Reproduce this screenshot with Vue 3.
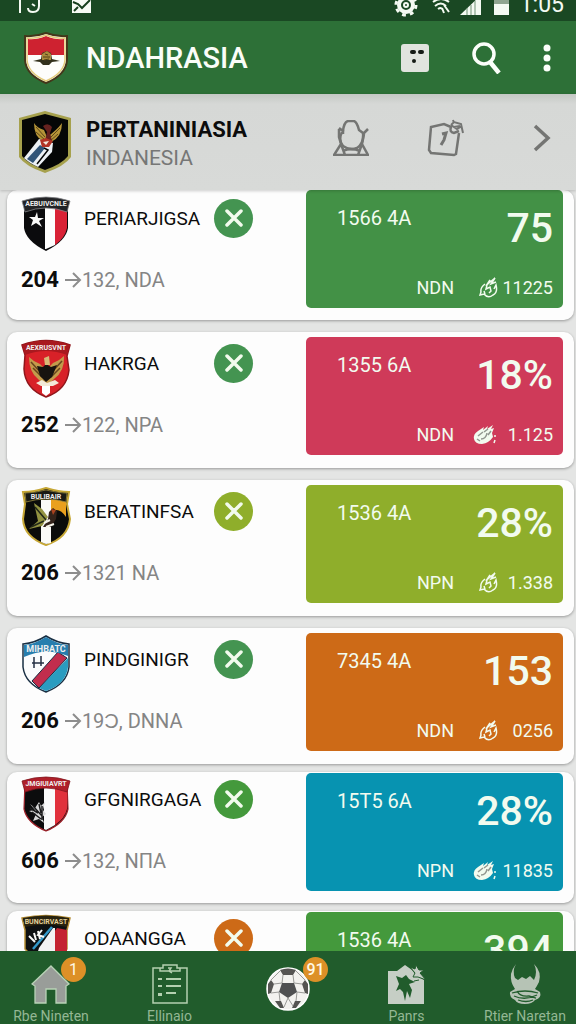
<script setup>
import { ref } from "vue";

const clubs = ref([
  { crest: "star", name: "PERIARJIGSA", badge: "green", points: "204", detail: "132, NDA", color: "green", code: "1566 4A", score: "75", tag: "NDN", icon: "flame", total: "11225" },
  { crest: "eagle", name: "HAKRGA", badge: "green", points: "252", detail: "122, NPA", color: "pink", code: "1355 6A", score: "18%", tag: "NDN", icon: "glove", total: "1.125" },
  { crest: "gold", name: "BERATINFSA", badge: "lime", points: "206", detail: "1321 NA", color: "lime", code: "1536 4A", score: "28%", tag: "NPN", icon: "flame", total: "1.338" },
  { crest: "blue", name: "PINDGINIGR", badge: "green", points: "206", detail: "19Ɔ, DNNA", color: "orange", code: "7345 4A", score: "153", tag: "NDN", icon: "flame", total: "0256" },
  { crest: "red", name: "GFGNIRGAGA", badge: "leaf", points: "606", detail: "132, NПA", color: "teal", code: "15T5 6A", score: "28%", tag: "NPN", icon: "glove", total: "11835", compact: true },
  { crest: "dark", name: "ODAANGGA", badge: "orange", points: "206", detail: "132, NDA", color: "leaf", code: "1536 4A", score: "394", tag: "NDN", icon: "flame", total: "1.225", compact: true },
]);

const tabs = [
  { icon: "home", label: "Rbe Nineten", count: "1" },
  { icon: "notes", label: "Ellinaio" },
  { icon: "ball", label: "", count: "91" },
  { icon: "photo", label: "Panrs" },
  { icon: "horns", label: "Rtier Naretan" },
];
</script>

<template>
  <div class="app">
    <div class="status">
      <svg class="status-left" width="80" height="14" viewBox="0 0 80 14">
        <path d="M2 0V13M21 0V6Q21 12 15 12Q10 12 10 8M14 4L17 6" fill="none" stroke="#f4faf2" stroke-width="2" />
        <rect x="54" y="-4" width="19" height="17" fill="#f7fbf5" />
        <path d="M55 2L60 4L64 8L72 0M56 11L60 7" fill="none" stroke="#173f1d" stroke-width="2" />
      </svg>
      <div class="status-right">
        <svg width="120" height="17" viewBox="0 0 120 17">
          <circle cx="14" cy="5" r="7" fill="none" stroke="#f4faf2" stroke-width="4" />
          <circle cx="14" cy="5" r="10" fill="none" stroke="#f4faf2" stroke-width="3" stroke-dasharray="3.8 4.05" />
          <circle cx="14" cy="5" r="2" fill="none" stroke="#f4faf2" stroke-width="2" />
          <path d="M41 2Q49-4 57 2M43 6Q49 1 54 6M46 9Q49 7 50 9M52 5L57 12M50 8L52 13" fill="none" stroke="#f4faf2" stroke-width="2" />
          <path d="M68 15L89-5V15Z" fill="#f4faf2" />
          <path d="M75 8V15M79 5V15M83 1V15" stroke="#6f9172" />
          <rect x="102" y="-2" width="15" height="17" fill="#f4faf2" />
          <rect x="102" y="-2" width="15" height="6" fill="#8fa590" />
        </svg>
        <span class="clock">1:05</span>
      </div>
    </div>

    <header class="topbar">
      <svg class="logo" width="46" height="52" viewBox="0 0 46 52">
        <path d="M23 1Q34 5 44 4V28Q43 43 23 51Q3 43 2 28V4Q12 5 23 1Z" fill="#fdfdfb" stroke="#44371a" stroke-width="2" />
        <path d="M23 4Q33 8 41 7V23H5V7Q13 8 23 4Z" fill="#ce2230" />
        <path d="M23 3Q34 7 42 6V28Q41 41 23 49Q5 41 4 28V6Q12 7 23 3Z" fill="none" stroke="#e3cb7c" stroke-width="1.5" />
        <path d="M10 29L18 27L19 21L24 19L28 21L29 27L37 29L29 30L26 33H20L17 30Z" fill="#32301c" />
        <path d="M19 22L24 19L28 22L28 28H19Z" fill="#a98a3d" />
        <path d="M20 25H27M21 28L26 27M22 22L25 23" stroke="#544019" stroke-width="1" />
      </svg>
      <h1>NDAHRASIA</h1>
      <button class="icon-btn" aria-label="Board">
        <svg width="30" height="30" viewBox="0 0 30 30">
          <rect x="1" y="1" width="28" height="28" rx="3" fill="#e1e4de" />
          <rect x="10" y="7" width="6" height="4" rx="2" fill="#151b15" />
          <rect x="18" y="7" width="6" height="4" rx="2" fill="#151b15" />
          <rect x="12" y="16" width="4" height="4" rx="2" fill="#151b15" />
        </svg>
      </button>
      <button class="icon-btn search" aria-label="Search">
        <svg width="30" height="32" viewBox="0 0 30 32">
          <circle cx="12" cy="12" r="10" fill="none" stroke="#fbfefa" stroke-width="3.5" />
          <path d="M18 20L27 31" stroke="#fbfefa" stroke-width="4.5" />
        </svg>
      </button>
      <button class="icon-btn" aria-label="More">
        <svg width="10" height="30" viewBox="0 0 10 30">
          <circle cx="5" cy="5" r="3.5" fill="#fbfefa" />
          <circle cx="5" cy="15" r="3.5" fill="#fbfefa" />
          <circle cx="5" cy="25" r="3.5" fill="#fbfefa" />
        </svg>
      </button>
    </header>

    <section class="league">
      <svg class="league-crest" width="54" height="64" viewBox="0 0 54 64">
        <path d="M27 1L53 8V47Q47 56 27 63Q7 56 1 47V8Z" fill="#a6a14d" />
        <path d="M27 4L50 10V46Q44 54 27 60Q10 54 4 46V10Z" fill="#050606" />
        <path d="M21 29L35 33L34 42L20 57Q11 53 6 48Z" fill="#edf1f5" />
        <path d="M22 35L27 38L15 53L9 49Z" fill="#315477" />
        <path d="M26 38L30 40L19 54" fill="none" stroke="#050606" stroke-width="1.5" />
        <path d="M16 13Q19 18 26 20L29 27Q39 20 44 13Q44 27 33 32L25 31Q16 27 16 13Z" fill="#b59438" />
        <path d="M18 17L27 27M18 22L27 30M42 18L32 28M40 24L32 31" stroke="#5f4718" />
        <path d="M25 16Q30 12 34 17L32 23L34 31H27L29 22Z" fill="#66221f" />
        <path d="M22 30L28 28L35 31L31 37H24Z" fill="#b23326" />
        <path d="M25 32L31 31L28 35Z" fill="#f3e7dc" />
      </svg>
      <div class="league-text">
        <strong>PERTANINIASIA</strong>
        <span>INDANESIA</span>
      </div>
      <button class="icon-btn" aria-label="Supporters">
        <svg width="36" height="36" viewBox="0 0 36 36" fill="none" stroke="#747573" stroke-width="2.5">
          <path d="M10 11Q11 2 15 1H21Q24 2 26 10L30 13Q31 24 24 28Q17 31 10 26Q5 20 9 12" />
          <path d="M6 8L10 11V14M30 14L35 9M6 9V17L8 24L1 35H35L29 24L31 14M8 24L12 35M29 24L25 35M10 31Q18 27 27 31" />
        </svg>
      </button>
      <button class="icon-btn ticket" aria-label="Fixtures">
        <svg width="38" height="38" viewBox="0 0 38 38" fill="none" stroke="#747573" stroke-width="2.5">
          <path d="M32 14L29 35L27 36L4 34L2 31L4 8L17 5L24 8Q22 13 27 14L32 12" />
          <path d="M24 6L27 3L34 5L36 14M24 6L30 10L35 7M27 8L33 7M27 4L26 1" stroke-width="2" />
          <path d="M15 15L19 14L17 21L14 26" stroke-width="3" />
        </svg>
      </button>
      <button class="icon-btn" aria-label="Open league">
        <svg width="18" height="28" viewBox="0 0 18 28">
          <path d="M2 2L15 14L2 26" fill="none" stroke="#747573" stroke-width="3.5" />
        </svg>
      </button>
    </section>

    <main class="club-list">
      <article v-for="club in clubs" :key="club.name" class="card" :class="{ compact: club.compact }">
        <div class="club">
          <div class="club-head">
            <svg class="crest" width="50" height="60" viewBox="0 0 50 60">
              <template v-if="club.crest === 'star'">
                <path d="M3 7H47V34Q45 47 25 57Q5 47 3 34Z" fill="#0b0b0d" />
                <path d="M24 13H34V51L25 55H24Z" fill="#fdfdfd" />
                <path d="M34 13H46V34Q44 44 34 51Z" fill="#d92236" />
                <path d="M1 7Q25-1 49 7L46 18Q25 10 4 18Z" fill="#222326" stroke="#85878a" stroke-width="0.8" />
                <path d="M16 18L17 24L23 24L18 27L21 33L15 29L10 32L12 26L8 23L14 23Z" fill="#f9f9f9" />
                <text x="25" y="12" class="crest-text">AEBUIVCNLE</text>
              </template>
              <template v-else-if="club.crest === 'eagle'">
                <path d="M1 6Q25-3 49 6L46 17L48 31Q46 51 25 58Q4 50 3 30L4 16Z" fill="#d82128" stroke="#8f161b" stroke-width="1.5" />
                <path d="M1 6Q25-3 49 6L46 16Q25 8 4 16Z" fill="#a9191f" />
                <text x="25" y="11" class="crest-text">AEXRUSVNT</text>
                <path d="M8 18Q13 23 19 25L25 31L32 24Q38 22 43 17Q44 32 33 40L29 44H21L17 40Q8 33 8 18Z" fill="#c39a4b" />
                <path d="M10 23L20 34M12 29L21 38M41 22L30 34M39 29L30 38" stroke="#67451e" stroke-width="1.5" />
                <path d="M16 27L22 28L25 25L30 28L36 26L31 38L25 43L19 37Z" fill="#17130f" />
                <path d="M23 19L28 17L29 26H24Z" fill="#d9b976" />
                <path d="M15 44L21 41L26 44L34 41L38 44L32 47L20 47Z" fill="#f3e9d8" />
                <path d="M21 47H29V54L25 57L21 54Z" fill="#fff" />
              </template>
              <template v-else-if="club.crest === 'gold'">
                <path d="M2 5Q13 5 25 1Q38 5 48 5L46 17L49 32Q47 51 25 58Q3 50 2 32L4 17Z" fill="#0b0c0a" stroke="#c6a735" stroke-width="2" />
                <path d="M20 13H30V56L25 57L20 55Z" fill="#fafaf7" />
                <path d="M30 13H45V30Q38 19 30 25Z" fill="#e9a01e" />
                <path d="M4 6Q13 6 25 3Q38 6 46 6L45 15Q25 9 5 15Z" fill="#191a15" stroke="#998940" stroke-width="0.8" />
                <text x="25" y="12" class="crest-text">BULIBAIR</text>
                <path d="M13 16L21 22L27 30L21 39L8 42L17 34Z" fill="#939341" />
                <path d="M14 20L25 33M10 40L23 34" stroke="#222818" stroke-width="1.5" />
                <path d="M28 25L32 21L36 24L35 32L30 40L22 40L27 32Z" fill="#33231a" />
                <path d="M30 22L35 23L32 28Z" fill="#a9431f" />
                <path d="M23 36L29 33M25 40L33 37" stroke="#f4f3e9" stroke-width="2" />
              </template>
              <template v-else-if="club.crest === 'blue'">
                <path d="M25 1Q36 8 48 9V32Q46 49 25 57Q4 49 2 32V9Q14 8 25 1Z" fill="#fbfcfd" stroke="#192f43" stroke-width="1.5" />
                <path d="M47 23L47 32Q45 49 25 56L18 53Z" fill="#2a9cc0" />
                <path d="M37 17L46 23L18 53L11 46Z" fill="#c12d4d" stroke="#182c42" stroke-width="1" />
                <path d="M25 2Q36 9 47 10V21Q25 12 3 22V10Q14 9 25 2Z" fill="#277eae" />
                <text x="25" y="17" class="crest-text wide">MIHBATC</text>
                <path d="M13 22V33M20 21V31M11 28H23" stroke="#263144" stroke-width="1.5" />
              </template>
              <template v-else-if="club.crest === 'red'">
                <path d="M4 8H46L47 34Q44 48 25 56Q6 48 3 34Z" fill="#0c0c0d" stroke="#9d2028" stroke-width="1.2" />
                <path d="M23 13H34V50L25 55L23 54Z" fill="#fbfbfb" />
                <path d="M34 13H46V34Q44 43 34 50Z" fill="#e1313c" />
                <path d="M1 6Q25-2 49 6L46 17Q25 9 4 17Z" fill="#af1f29" stroke="#7f151d" stroke-width="0.8" />
                <text x="25" y="11" class="crest-text">JMGIUIAVRT</text>
                <path d="M9 29L14 33L18 27L20 31L24 27L22 35L25 39L21 42L23 48L18 44L12 46L15 39L8 36L14 35Z" fill="#d9d9d9" />
                <path d="M12 31L21 41M18 29L20 38M21 31V45M11 37L20 44M9 33L17 38" stroke="#1b1b1c" stroke-width="1.5" />
              </template>
              <template v-else>
                <path d="M1 4Q25-1 49 4L46 16V35L25 57L4 35V16Z" fill="#0d1011" stroke="#b58e35" stroke-width="1.5" />
                <path d="M21 35L36 14L46 16V40L25 57Z" fill="#c42331" />
                <path d="M18 34L32 14H34V50L25 57L14 47Z" fill="#f3f3f4" />
                <path d="M12 35L31 13" stroke="#3398c9" stroke-width="2.5" />
                <path d="M8 22L14 28M13 19L15 26M17 17L19 25M21 16L17 21L23 23" stroke="#f9f9f7" stroke-width="2" fill="none" />
                <path d="M2 4Q25-1 48 4L46 13Q25 8 4 13Z" fill="#28230f" />
                <text x="25" y="10" class="crest-text yellow">BUNCIRVAST</text>
              </template>
            </svg>
            <h2>{{ club.name }}</h2>
            <button class="badge" :class="club.badge" :aria-label="'Remove ' + club.name">
              <svg width="18" height="18" viewBox="0 0 18 18">
                <path d="M2 2L16 16M16 2L2 16" stroke="#f2fbed" stroke-width="3.5" stroke-linecap="round" />
              </svg>
            </button>
          </div>
          <p class="record">
            <strong>{{ club.points }}</strong>
            <svg width="17" height="16" viewBox="0 0 17 16">
              <path d="M0 8H15M8 1L15 8L8 15" fill="none" stroke="#8d8d8d" stroke-width="2" />
            </svg>
            <span>{{ club.detail }}</span>
          </p>
        </div>

        <div class="panel" :class="club.color">
          <div class="panel-top">
            <span>{{ club.code }}</span>
            <strong>{{ club.score }}</strong>
          </div>
          <div class="panel-bottom">
            <span>{{ club.tag }}</span>
            <div class="total">
              <svg v-if="club.icon === 'flame'" class="flame" width="19" height="22" viewBox="0 0 19 22" fill="none" stroke="currentColor" stroke-width="1.5">
                <path d="M6 7Q1 11 2 15L1 18L5 17Q9 22 14 18Q19 16 17 8L15 12M7 9L11 3L10 6L16 1L12 7L17 5M8 8L7 12L11 10L12 14L10 16M5 14L6 17" />
              </svg>
              <svg v-else width="24" height="22" viewBox="0 0 24 22">
                <path d="M1 15Q0 10 5 7L11 3L10 6L15 2L14 5L20 1L18 5L21 4L19 9L20 13Q16 19 9 20Q2 20 1 15Z" fill="currentColor" />
                <path d="M5 12L10 8M8 15Q13 15 14 9M11 8L15 5M15 11L18 7M4 15L7 17" stroke="#0006" stroke-width="1.5" fill="none" />
                <path d="M22 11V13M22 16L21 19" stroke="currentColor" stroke-width="1.5" />
              </svg>
              <span>{{ club.total }}</span>
            </div>
          </div>
        </div>
      </article>
    </main>

    <nav class="tabs">
      <a v-for="tab in tabs" :key="tab.icon" href="#" class="tab" :class="tab.icon" :aria-label="tab.label || 'Matches'">
        <span class="tab-icon">
          <svg v-if="tab.icon === 'home'" width="40" height="40" viewBox="0 0 40 40">
            <path d="M20 2L38 20L35 22V39H25V25H15V39H4V22L1 20Z" fill="#999d99" stroke="#b9d3b7" stroke-width="1.3" />
          </svg>
          <svg v-else-if="tab.icon === 'notes'" width="36" height="40" viewBox="0 0 36 40" fill="none" stroke="#b4d0b0" stroke-width="1.5">
            <path d="M8 4H1V39H35V4H28M8 4V7H28V4H25V1H11V4ZM16 4L19 4L17 7L20 9" />
            <path d="M6 15H10M14 15H29M6 22H10M14 22H29M6 30H10M14 29H24" stroke-width="2" />
            <path d="M6 31H10" stroke-width="2" />
          </svg>
          <svg v-else-if="tab.icon === 'ball'" width="44" height="44" viewBox="0 0 44 44">
            <circle cx="22" cy="22" r="21" fill="#f3f2ef" stroke="#fff" stroke-width="1.5" />
            <path d="M16 16H28L31 25L22 31L13 25Z" fill="#4f5051" />
            <path d="M14 3Q22 0 30 3L27 8H17ZM2 17L5 13L8 17L5 26L2 27ZM42 17L39 13L36 17L39 26L42 27ZM9 34L15 34L18 41L14 41ZM35 34L29 34L26 41L30 41Z" fill="#555452" />
            <path d="M17 8L16 16L8 17M27 8L28 16L36 17M13 25L5 26M31 25L39 26M22 31L18 40M22 31L27 39M13 25L14 34M31 25L30 34M5 13L14 4M39 13L30 4" stroke="#999996" fill="none" />
          </svg>
          <svg v-else-if="tab.icon === 'photo'" width="40" height="40" viewBox="0 0 40 40">
            <path d="M1 7H10L18 1L25 6L28 10L37 16V40H1Z" fill="#c6cec5" />
            <path d="M9 12L15 14L19 11L22 15L28 18L22 20L25 26L23 34L20 27L18 37L16 28L13 25L9 27L12 20Z" fill="#215c2c" />
            <path d="M23 3L28 5L29 1L32 6L37 6L33 9L39 16L31 13L26 13L28 9ZM27 17L32 16" fill="#c6cec5" stroke="#215c2c" />
          </svg>
          <svg v-else width="34" height="40" viewBox="0 0 34 40">
            <path d="M8 0Q4 7 7 14L10 16L14 13L18 15L22 12L26 16Q30 8 26 0Q34 8 31 18Q29 22 27 25L32 28Q34 34 27 36Q24 40 17 40Q9 40 7 36Q1 33 2 28L7 25Q2 18 3 10Q4 5 8 0Z" fill="#b6c3b5" />
            <path d="M4 29Q17 25 30 29M6 32Q17 37 29 31M9 27Q12 33 21 32L28 34M10 36Q18 39 25 36" fill="none" stroke="#215c2c" stroke-width="1.3" />
          </svg>
          <span v-if="tab.count" class="count">{{ tab.count }}</span>
        </span>
        <span v-if="tab.label" class="tab-label">{{ tab.label }}</span>
      </a>
    </nav>
  </div>
</template>

<style>
body {
  margin: 0;
  background: #e3e4e3;
}
</style>

<style scoped>
.app {
  display: flex;
  flex-direction: column;
  height: 100vh;
  overflow: hidden;
  font-family: Roboto, "Liberation Sans", sans-serif;
  color: #0c0c0c;
}

h1,
h2,
p {
  margin: 0;
}

.status {
  flex: none;
  display: flex;
  justify-content: space-between;
  align-items: flex-start;
  height: 21px;
  padding: 0 12px 0 18px;
  overflow: hidden;
  background: #1a4823;
}

.status-right {
  display: flex;
  align-items: flex-end;
  height: 17px;
  gap: 8px;
}

.clock {
  color: #f4faf2;
  font-size: 23px;
  line-height: 24px;
}

.icon-btn {
  display: flex;
  padding: 0;
  border: 0;
  background: none;
  cursor: pointer;
}

.topbar {
  flex: none;
  display: flex;
  align-items: center;
  height: 73px;
  padding: 0 24px 0 23px;
  background: #2d7037;
}

.topbar h1 {
  flex: 1;
  margin-left: 17px;
  color: #fafdf8;
  font-size: 29px;
  font-weight: 500;
}

.topbar .search {
  margin: 0 40px 0 42px;
}

.league {
  flex: none;
  position: relative;
  z-index: 1;
  display: flex;
  align-items: center;
  box-sizing: border-box;
  height: 96px;
  padding: 0 25px 0 18px;
  background: linear-gradient(#c4c8c4, #d6d8d6 10px, #d8dad8);
  box-shadow: 0 1px 3px #0003;
}

.league-text {
  flex: 1;
  display: flex;
  flex-direction: column;
  margin-left: 14px;
  padding-top: 3px;
  font-size: 22px;
  line-height: 29px;
}

.league-text strong {
  font-weight: 700;
}

.league-text span {
  color: #767776;
  font-size: 21px;
}

.league .icon-btn {
  margin-bottom: 8px;
}

.league .ticket {
  margin: 0 68px 8px 58px;
}

.club-list {
  flex: 1;
  min-height: 0;
  padding: 0 2px 0 7px;
  overflow: hidden;
  background: #e4e5e4;
}

.card {
  display: grid;
  grid-template-columns: minmax(0, 299fr) minmax(0, 257fr);
  margin-bottom: 12px;
  padding: 5px 11px 13px 0;
  border-radius: 10px;
  background: #fdfdfd;
  box-shadow: 0 1px 3px #0005;
}

.card:first-child {
  padding: 0 11px 12px 0;
}

.card.compact {
  margin-top: -4px;
  padding: 1px 11px 12px 0;
}

.club {
  padding: 2px 0 0 14px;
}

.card:first-child .club {
  padding-top: 4px;
}

.club-head {
  display: flex;
  align-items: center;
  height: 48px;
}

.crest {
  flex: none;
  align-self: flex-start;
}

.crest-text {
  fill: #eeeeee;
  font-size: 7px;
  font-weight: 700;
  text-anchor: middle;
}

.crest-text.wide {
  font-size: 9px;
}

.crest-text.yellow {
  fill: #e0cf9a;
}

.club-head h2 {
  width: 130px;
  margin-left: 13px;
  font-size: 19px;
  font-weight: 400;
  white-space: nowrap;
}

.badge {
  flex: none;
  display: flex;
  align-items: center;
  justify-content: center;
  width: 39px;
  height: 39px;
  padding: 0;
  border: 0;
  border-radius: 50%;
  cursor: pointer;
}

.record {
  display: flex;
  align-items: center;
  margin-top: 25px;
  font-size: 22px;
  line-height: 26px;
}

.record svg {
  margin-left: 6px;
}

.record span {
  color: #858585;
  font-size: 20px;
}

.panel {
  display: flex;
  flex-direction: column;
  justify-content: space-between;
  box-sizing: border-box;
  height: 118px;
  padding: 16px 10px 8px 31px;
  border-radius: 5px;
  color: #f2fbef;
  font-size: 20px;
  line-height: 24px;
}

.panel-top {
  display: flex;
  justify-content: space-between;
}

.panel-top strong {
  font-size: 41px;
  font-weight: 500;
  line-height: 44px;
}

.panel-bottom {
  display: flex;
  justify-content: flex-end;
  gap: 19px;
  font-size: 18px;
}

.total {
  display: flex;
  align-items: center;
  justify-content: space-between;
  width: 80px;
}

.flame {
  margin-left: 6px;
}

.green {
  background: #439146;
}

.badge.green {
  background: #449451;
}

.pink {
  background: #cf3a59;
}

.lime {
  background: #8fae2b;
}

.orange {
  background: #cd6a17;
}

.teal {
  background: #0793b1;
}

.leaf {
  background: #44993c;
}

.tabs {
  flex: none;
  display: flex;
  justify-content: space-between;
  box-sizing: border-box;
  height: 73px;
  padding: 0 9px;
  background: #215c2c;
}

.tab {
  display: flex;
  flex-direction: column;
  align-items: center;
  width: 84px;
  padding-top: 13px;
  color: #94b794;
  font-size: 14px;
  line-height: 16px;
  text-decoration: none;
  white-space: nowrap;
}

.tab.ball {
  padding-top: 16px;
}

.tab-icon {
  position: relative;
  display: flex;
  margin-bottom: 4px;
}

.count {
  position: absolute;
  top: -7px;
  left: 30px;
  width: 25px;
  height: 25px;
  border-radius: 50%;
  background: #dd9027;
  color: #fff8e5;
  font-size: 16px;
  line-height: 25px;
  text-align: center;
}

.ball .count {
  top: -10px;
  left: 37px;
  font-weight: 500;
}
</style>
